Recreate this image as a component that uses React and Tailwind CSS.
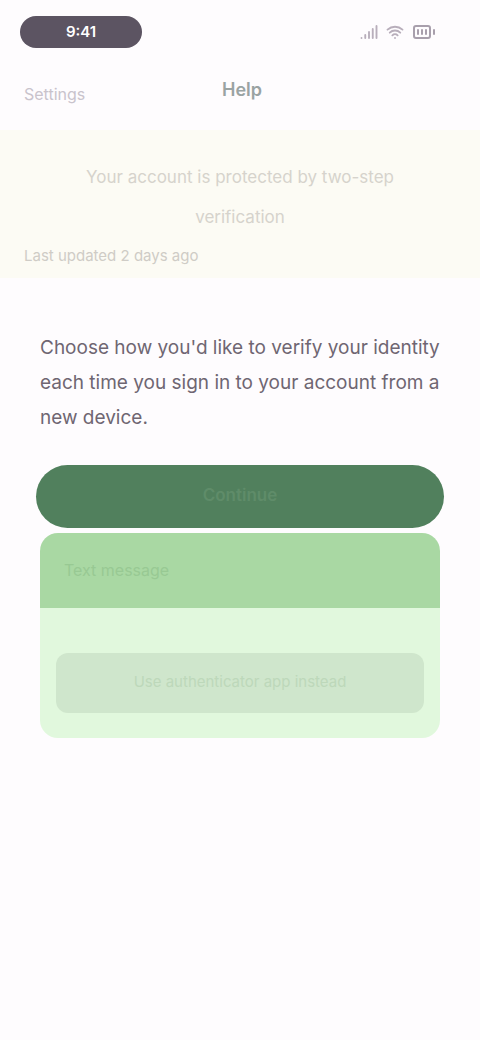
import { Signal, Wifi, BatteryFull } from "lucide-react";

export default function App() {
  return (
    <div className="min-h-[1040px] w-[480px] bg-[#fefcfe] font-['Inter',sans-serif]">
      {/* status bar */}
      <div className="flex items-center justify-between px-5 pt-[14px] h-[50px]">
        <div className="w-[122px] h-[32px] rounded-full bg-[#5c5462] flex items-center justify-center text-white text-[15px] font-semibold">
          9:41
        </div>
        <div className="flex items-center gap-2 pr-6 text-[#b8aebb]">
          <Signal size={18} strokeWidth={2.5} />
          <Wifi size={18} strokeWidth={2.5} />
          <BatteryFull size={24} strokeWidth={2} className="text-[#a89fac]" />
        </div>
      </div>

      {/* header */}
      <div className="flex items-center h-[80px] px-6 relative">
        <span className="text-[16px] text-[#c9c3cc] mt-[8px]">Settings</span>
        <span className="absolute left-[222px] top-[26px] text-[18px] font-semibold text-[#9aa3a3]">Help</span>
      </div>

      {/* banner */}
      <div className="bg-[#fcfbf4] px-6 pt-[27px] pb-[10px]">
        <p className="text-center text-[17px] leading-[40px] text-[#d6d3cc] px-10">
          Your account is protected by two-step verification
        </p>
        <p className="mt-[8px] text-[15px] text-[#cfccc6]">Last updated 2 days ago</p>
      </div>

      {/* body */}
      <div className="px-10 pt-[52px]">
        <p className="text-[19px] leading-[35px] text-[#6f6672]">
          Choose how you'd like to verify your identity each time you sign in to your account from a new device.
        </p>
      </div>

      <div className="px-[36px] pt-[30px] flex flex-col">
        <button className="h-[63px] rounded-full bg-[#51805d] text-[#5f8c69] text-[17px] font-semibold">
          Continue
        </button>
        <div className="mx-[4px] mt-[5px] rounded-t-[18px] bg-[#a9d8a3] h-[75px] flex items-center px-6 text-[16px] text-[#98c993]">
          Text message
        </div>
        <div className="mx-[4px] rounded-b-[18px] bg-[#e1f8dd] pt-[45px] pb-[25px] px-4">
          <div className="rounded-[12px] bg-[#cfe6cc] h-[60px] flex items-center justify-center text-[15px] text-[#bdd8ba]">
            Use authenticator app instead
          </div>
        </div>
      </div>
    </div>
  );
}
